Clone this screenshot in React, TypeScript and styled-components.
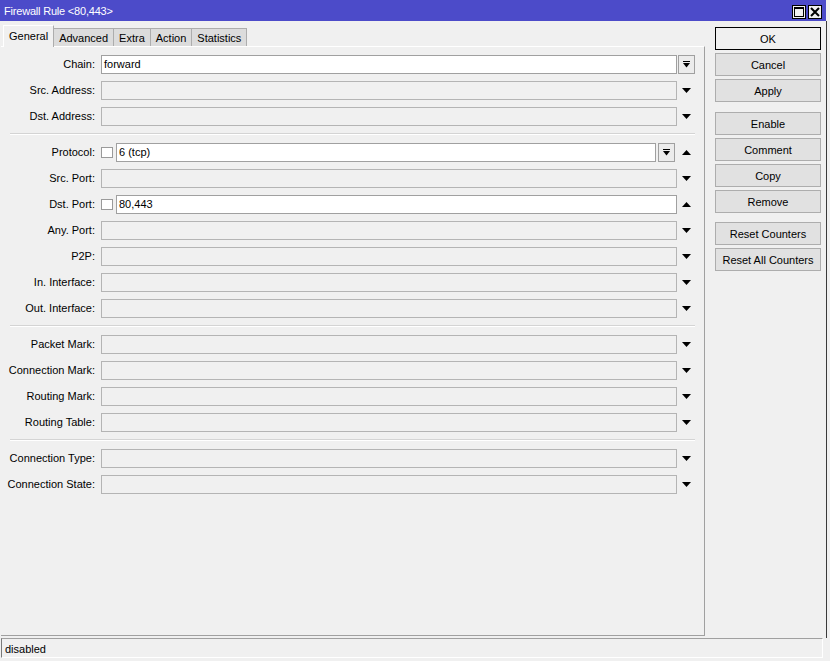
import React from 'react'
import styled, { createGlobalStyle } from 'styled-components'

const GlobalStyle = createGlobalStyle`
  html, body {
    margin: 0;
    padding: 0;
    background: #f0f0f0;
  }
  body {
    font-family: "Liberation Sans", Arial, sans-serif;
    font-size: 11px;
    color: #000;
  }
`

interface FieldRow {
  label: string
  value?: string
  enabled?: boolean
  checkbox?: boolean
  box?: boolean
  arrow: 'up' | 'down' | 'box'
}

const groups: Array<Array<FieldRow>> = [
  [
    { label: 'Chain', value: 'forward', enabled: true, arrow: 'box' },
    { label: 'Src. Address', arrow: 'down' },
    { label: 'Dst. Address', arrow: 'down' },
  ],
  [
    { label: 'Protocol', value: '6 (tcp)', enabled: true, checkbox: true, box: true, arrow: 'up' },
    { label: 'Src. Port', arrow: 'down' },
    { label: 'Dst. Port', value: '80,443', enabled: true, checkbox: true, arrow: 'up' },
    { label: 'Any. Port', arrow: 'down' },
    { label: 'P2P', arrow: 'down' },
    { label: 'In. Interface', arrow: 'down' },
    { label: 'Out. Interface', arrow: 'down' },
  ],
  [
    { label: 'Packet Mark', arrow: 'down' },
    { label: 'Connection Mark', arrow: 'down' },
    { label: 'Routing Mark', arrow: 'down' },
    { label: 'Routing Table', arrow: 'down' },
  ],
  [
    { label: 'Connection Type', arrow: 'down' },
    { label: 'Connection State', arrow: 'down' },
  ],
]

const tabs = ['General', 'Advanced', 'Extra', 'Action', 'Statistics']

const buttonGroups = [
  ['OK', 'Cancel', 'Apply'],
  ['Enable', 'Comment', 'Copy', 'Remove'],
  ['Reset Counters', 'Reset All Counters'],
]

const DownIcon = () => (
  <svg width="9" height="5" viewBox="0 0 9 5">
    <polygon points="0,0 9,0 4.5,5" fill="#000" />
  </svg>
)

const UpIcon = () => (
  <svg width="9" height="5" viewBox="0 0 9 5">
    <polygon points="0,5 9,5 4.5,0" fill="#000" />
  </svg>
)

const BarDownIcon = () => (
  <svg width="7" height="7" viewBox="0 0 7 7">
    <rect x="0" y="0" width="7" height="1" fill="#000" />
    <polygon points="0,2 7,2 3.5,6.5" fill="#000" />
  </svg>
)

const App: React.FC = () => {
  return (
    <Window>
      <GlobalStyle />
      <TitleBar>
        <Title>Firewall Rule &lt;80,443&gt;</Title>
        <TitleButtons>
          <TitleButton>
            <svg width="10" height="10" viewBox="0 0 10 10">
              <rect x="0.5" y="0.5" width="9" height="9" fill="none" stroke="#000" />
              <rect x="0" y="0" width="10" height="2" fill="#000" />
            </svg>
          </TitleButton>
          <TitleButton>
            <svg width="10" height="10" viewBox="0 0 10 10">
              <path d="M1 1 L9 9 M9 1 L1 9" stroke="#000" strokeWidth="2" />
            </svg>
          </TitleButton>
        </TitleButtons>
      </TitleBar>
      <Main>
        <LeftPane>
          <TabStrip>
            {tabs.map((t, i) => (
              <Tab key={t} active={i === 0}>
                {t}
              </Tab>
            ))}
          </TabStrip>
          <Panel>
            {groups.map((rows, gi) => (
              <React.Fragment key={gi}>
                {gi > 0 && <Separator />}
                {rows.map(row => (
                  <Row key={row.label}>
                    <Label>{row.label}:</Label>
                    {row.checkbox && <CheckBox />}
                    <Field enabled={row.enabled}>{row.value}</Field>
                    {row.box && (
                      <BoxButton inline>
                        <BarDownIcon />
                      </BoxButton>
                    )}
                    <ArrowSlot>
                      {row.arrow === 'box' ? (
                        <BoxButton>
                          <BarDownIcon />
                        </BoxButton>
                      ) : row.arrow === 'up' ? (
                        <UpIcon />
                      ) : (
                        <DownIcon />
                      )}
                    </ArrowSlot>
                  </Row>
                ))}
              </React.Fragment>
            ))}
          </Panel>
        </LeftPane>
        <ButtonColumn>
          {buttonGroups.map((g, gi) => (
            <ButtonGroup key={gi}>
              {g.map(b => (
                <Button key={b} primary={b === 'OK'}>
                  {b}
                </Button>
              ))}
            </ButtonGroup>
          ))}
        </ButtonColumn>
      </Main>
      <StatusBar>disabled</StatusBar>
    </Window>
  )
}

const Window = styled.div`
  width: 830px;
  height: 661px;
  display: flex;
  flex-direction: column;
  overflow: hidden;
`

const TitleBar = styled.div`
  height: 21px;
  width: 826px;
  background: #4c4bc9;
  display: flex;
  align-items: center;
  justify-content: space-between;
  flex-shrink: 0;
`

const Title = styled.div`
  color: #fff;
  padding-left: 4px;
  font-size: 11px;
  letter-spacing: -0.2px;
`

const TitleButtons = styled.div`
  display: flex;
  gap: 2px;
  padding-right: 4px;
  padding-top: 2px;
`

const TitleButton = styled.div`
  width: 12px;
  height: 12px;
  border: 1px solid #000;
  background: #f0f0f0;
  display: flex;
  align-items: center;
  justify-content: center;
`

const Main = styled.div`
  flex: 1;
  display: flex;
  width: 825px;
  padding: 4px 0 0 1px;
  border-right: 1px solid #3a3a3a;
`

const LeftPane = styled.div`
  width: 704px;
  display: flex;
  flex-direction: column;
`

const TabStrip = styled.div`
  height: 21px;
  display: flex;
  align-items: flex-end;
  padding-left: 2px;
  position: relative;
  z-index: 1;
`

interface TabProps {
  active?: boolean
}

const Tab = styled.div<TabProps>`
  height: ${p => (p.active ? '22px' : '18px')};
  box-sizing: border-box;
  padding: ${p => (p.active ? '4px 5px 0 5px' : '3px 5px 0 5px')};
  margin-bottom: ${p => (p.active ? '-1px' : '0')};
  background: ${p => (p.active ? '#f0f0f0' : '#dcdcdc')};
  border: 1px solid ${p => (p.active ? '#f0f0f0' : '#adadad')};
  border-left-color: ${p => (p.active ? '#ffffff' : '#adadad')};
  border-top-color: ${p => (p.active ? '#ffffff' : '#adadad')};
  border-right-color: #adadad;
  border-bottom: none;
  margin-left: ${p => (p.active ? '0' : '-1px')};
  white-space: nowrap;
`

const Panel = styled.div`
  flex: 1;
  border-right: 1px solid #a0a0a0;
  border-bottom: 1px solid #a0a0a0;
  border-top: 1px solid #ffffff;
  padding: 4px 9px 0 0;
  margin-bottom: 2px;
`

const Row = styled.div`
  height: 26px;
  display: flex;
  align-items: center;
`

const Label = styled.div`
  width: 94px;
  margin-right: 6px;
  text-align: right;
  white-space: nowrap;
`

const CheckBox = styled.div`
  width: 12px;
  height: 11px;
  box-sizing: border-box;
  border: 1px solid #9a9a9a;
  background: #fff;
  margin-right: 3px;
`

interface FieldProps {
  enabled?: boolean
}

const Field = styled.div<FieldProps>`
  flex: 1;
  height: 19px;
  box-sizing: border-box;
  border: 1px solid ${p => (p.enabled ? '#a0a0a0' : '#b4b4b4')};
  background: ${p => (p.enabled ? '#ffffff' : '#f0f0f0')};
  padding-left: 2px;
  line-height: 17px;
  white-space: nowrap;
`

const ArrowSlot = styled.div`
  width: 17px;
  margin-left: 1px;
  display: flex;
  align-items: center;
  justify-content: center;
`

interface BoxButtonProps {
  inline?: boolean
}

const BoxButton = styled.div<BoxButtonProps>`
  width: 17px;
  height: 19px;
  box-sizing: border-box;
  border: 1px solid #a0a0a0;
  background: #ececec;
  display: flex;
  align-items: center;
  justify-content: center;
  margin: ${p => (p.inline ? '0 2px 0 2px' : '0')};
`

const Separator = styled.div`
  height: 10px;
  margin-left: 9px;
  display: flex;
  align-items: center;
  &::after {
    content: '';
    flex: 1;
    border-top: 1px solid #d4d4d4;
    border-bottom: 1px solid #ffffff;
  }
`

const ButtonColumn = styled.div`
  margin-left: 10px;
  padding-top: 2px;
  display: flex;
  flex-direction: column;
  gap: 10px;
`

const ButtonGroup = styled.div`
  display: flex;
  flex-direction: column;
  gap: 3px;
  &:last-child {
    margin-top: -1px;
  }
`

interface ButtonProps {
  primary?: boolean
}

const Button = styled.div<ButtonProps>`
  width: 106px;
  height: 23px;
  box-sizing: border-box;
  border: 1px solid ${p => (p.primary ? '#000' : '#adadad')};
  background: ${p => (p.primary ? '#f0f0f0' : '#e1e1e1')};
  display: flex;
  align-items: center;
  justify-content: center;
  white-space: nowrap;
`

const StatusBar = styled.div`
  height: 20px;
  width: 822px;
  box-sizing: border-box;
  margin: 0 0 3px 1px;
  border-top: 1px solid #a0a0a0;
  border-left: 1px solid #7a7a7a;
  border-right: 1px solid #ffffff;
  border-bottom: 1px solid #ffffff;
  padding: 1px 0 0 3px;
  line-height: 18px;
  flex-shrink: 0;
`

export default App
